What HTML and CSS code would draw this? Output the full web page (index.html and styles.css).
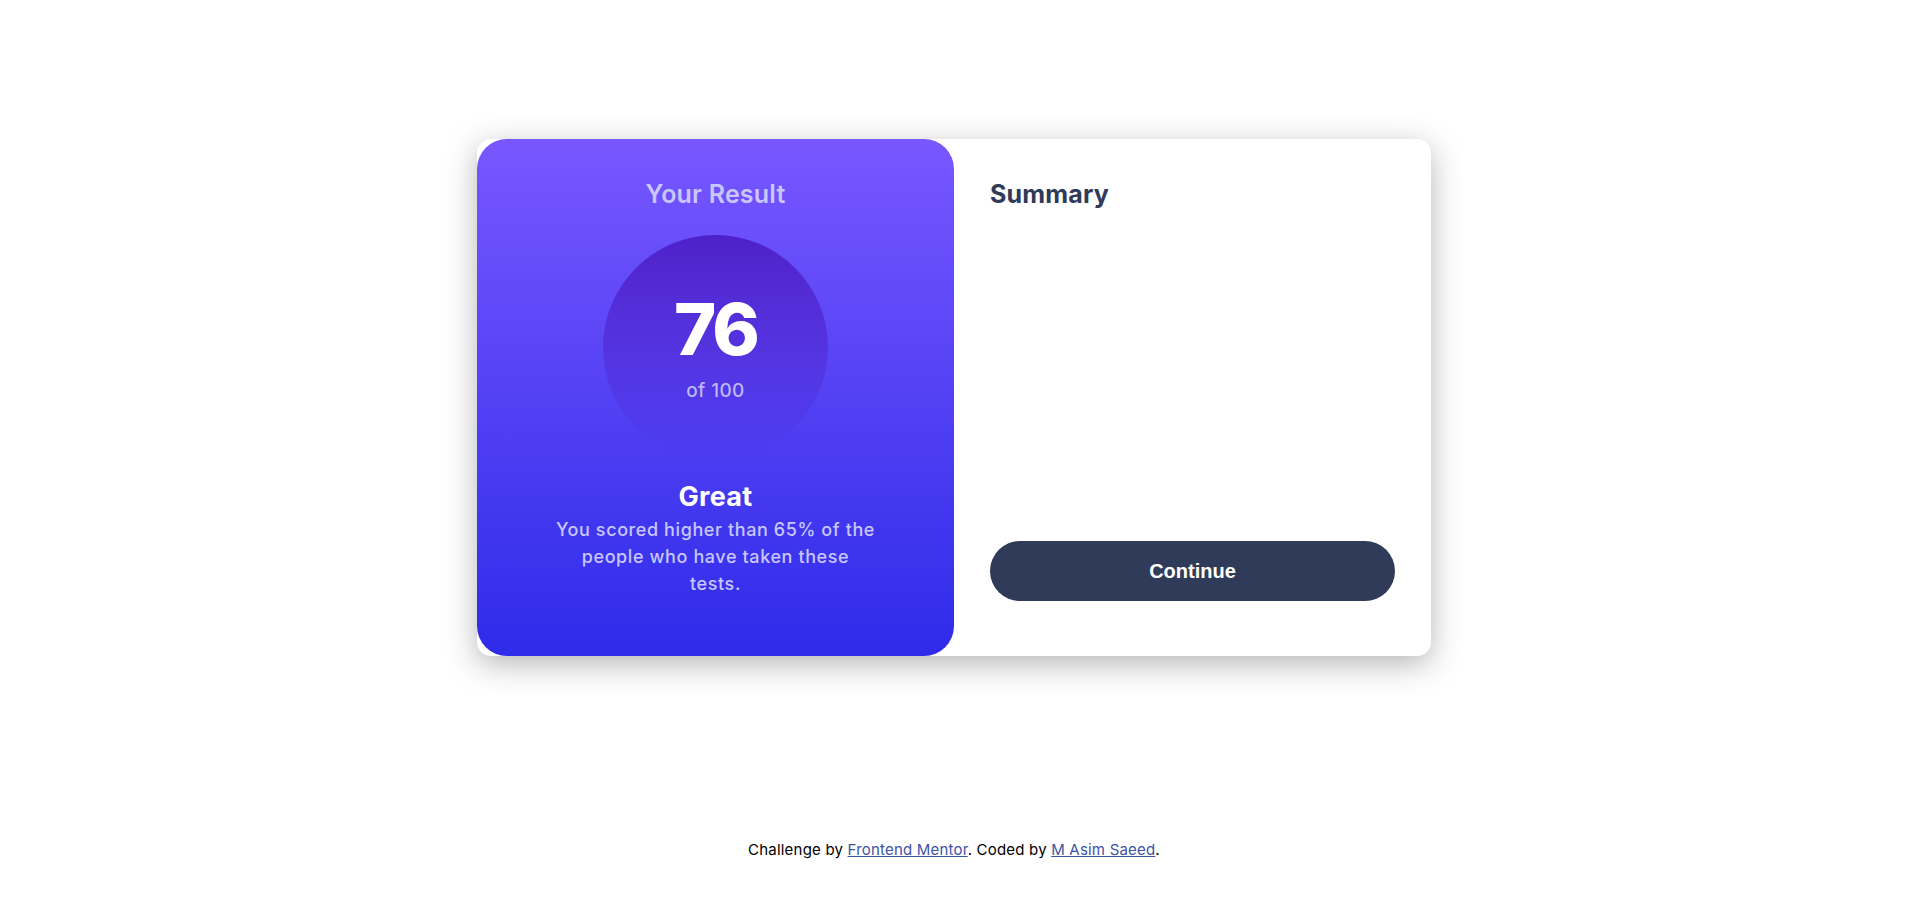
FILE: index.html
```html
<!DOCTYPE html>
<html lang="en">
<head>
<meta charset="utf-8">
<title>Results summary component</title>
<link rel="stylesheet" href="styles.css">
</head>
<body>
<main class="main">
  <div class="card">
    <section class="result">
      <h1 class="result-title">Your Result</h1>
      <div class="score">
        <span class="score-value">76</span>
        <span class="score-total">of 100</span>
      </div>
      <h2 class="rating">Great</h2>
      <p class="result-text">You scored higher than 65% of the people who have taken these tests.</p>
    </section>
    <section class="summary">
      <h2 class="summary-title">Summary</h2>
      <button class="continue">Continue</button>
    </section>
  </div>
</main>
<footer class="attribution">
  <p>Challenge by <a href="#">Frontend Mentor</a>. Coded by <a href="#">M Asim Saeed</a>.</p>
</footer>
</body>
</html>
```

FILE: styles.css
```css
* { box-sizing: border-box; }

body {
  margin: 0;
  min-height: 100vh;
  display: flex;
  flex-direction: column;
  background: #ffffff;
  font-family: "Inter", "Noto Sans", sans-serif;
}

.main {
  flex: 1;
  display: flex;
  align-items: center;
  justify-content: center;
}

.card {
  width: 954px;
  height: 517px;
  display: flex;
  background: #ffffff;
  border-radius: 14px;
  box-shadow: 0 8px 30px rgba(40, 40, 50, 0.34);
}

.result {
  width: 477px;
  flex-shrink: 0;
  display: flex;
  flex-direction: column;
  align-items: center;
  padding: 39px 40px 0;
  border-radius: 30px;
  background: linear-gradient(180deg, #7857ff 0%, #2e2be9 100%);
  text-align: center;
}

.result-title {
  margin: 0;
  font-size: 25px;
  line-height: 32px;
  font-weight: 600;
  color: #c8c7ff;
  letter-spacing: 0.2px;
}

.score {
  width: 225px;
  height: 225px;
  margin-top: 25px;
  border-radius: 50%;
  background: linear-gradient(180deg, rgba(77, 33, 201, 1) 0%, rgba(37, 33, 201, 0) 100%);
  display: flex;
  flex-direction: column;
  align-items: center;
  padding-top: 56px;
}

.score-value {
  font-size: 72px;
  line-height: 76px;
  font-weight: 800;
  color: #ffffff;
  letter-spacing: -3px;
}

.score-total {
  margin-top: 12px;
  font-size: 19px;
  line-height: 24px;
  font-weight: 500;
  color: rgba(220, 218, 255, 0.8);
  letter-spacing: 0.4px;
}

.rating {
  margin: 20px 0 0;
  font-size: 27px;
  line-height: 34px;
  font-weight: 700;
  color: #ffffff;
  letter-spacing: 0.3px;
}

.result-text {
  margin: 2px 0 0;
  width: 320px;
  font-size: 18px;
  line-height: 27px;
  font-weight: 500;
  color: #c8c7ff;
  letter-spacing: 0.6px;
}

.summary {
  flex: 1;
  display: flex;
  flex-direction: column;
  justify-content: space-between;
  padding: 39px 36px 55px;
}

.summary-title {
  margin: 0;
  font-size: 25px;
  line-height: 32px;
  font-weight: 700;
  color: #303b59;
  letter-spacing: 0.2px;
}

.continue {
  width: 100%;
  height: 60px;
  border: none;
  border-radius: 30px;
  background: #303b59;
  color: #ffffff;
  font-family: "Liberation Sans", Arial, sans-serif;
  font-size: 20px;
  font-weight: 700;
  cursor: pointer;
}

.attribution {
  height: 108px;
  display: flex;
  align-items: center;
  justify-content: center;
}

.attribution p {
  margin: 0;
  font-size: 15px;
  color: #000000;
  letter-spacing: 0.2px;
}

.attribution a {
  color: #3e52a3;
}
```
